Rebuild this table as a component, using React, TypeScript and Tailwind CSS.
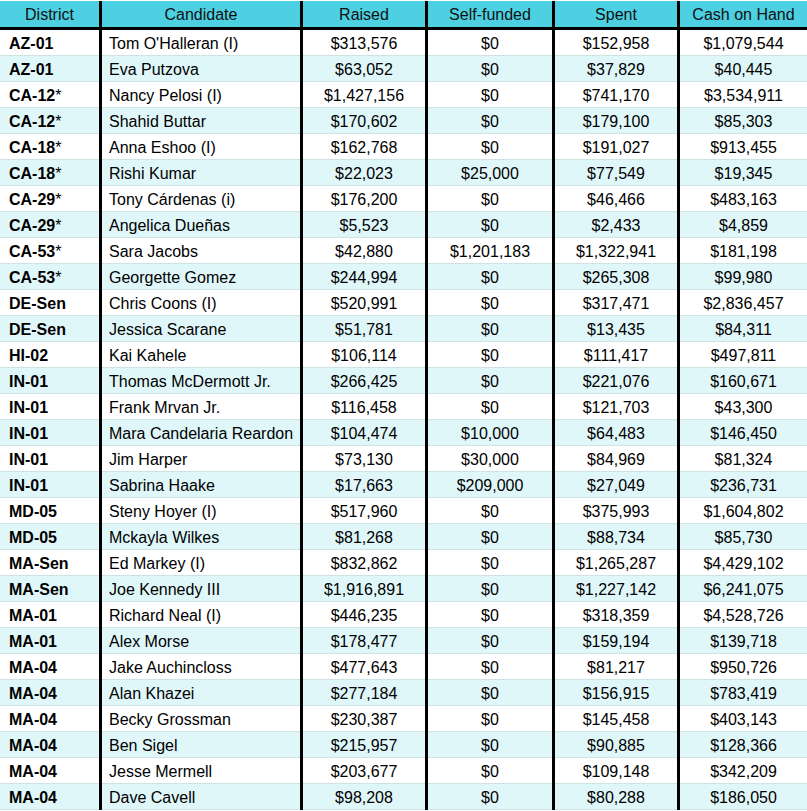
const rows: [string, string, string, string, string, string][] = [
  ['AZ-01', "Tom O'Halleran (I)", '$313,576', '$0', '$152,958', '$1,079,544'],
  ['AZ-01', 'Eva Putzova', '$63,052', '$0', '$37,829', '$40,445'],
  ['CA-12*', 'Nancy Pelosi (I)', '$1,427,156', '$0', '$741,170', '$3,534,911'],
  ['CA-12*', 'Shahid Buttar', '$170,602', '$0', '$179,100', '$85,303'],
  ['CA-18*', 'Anna Eshoo (I)', '$162,768', '$0', '$191,027', '$913,455'],
  ['CA-18*', 'Rishi Kumar', '$22,023', '$25,000', '$77,549', '$19,345'],
  ['CA-29*', 'Tony Cárdenas (i)', '$176,200', '$0', '$46,466', '$483,163'],
  ['CA-29*', 'Angelica Dueñas', '$5,523', '$0', '$2,433', '$4,859'],
  ['CA-53*', 'Sara Jacobs', '$42,880', '$1,201,183', '$1,322,941', '$181,198'],
  ['CA-53*', 'Georgette Gomez', '$244,994', '$0', '$265,308', '$99,980'],
  ['DE-Sen', 'Chris Coons (I)', '$520,991', '$0', '$317,471', '$2,836,457'],
  ['DE-Sen', 'Jessica Scarane', '$51,781', '$0', '$13,435', '$84,311'],
  ['HI-02', 'Kai Kahele', '$106,114', '$0', '$111,417', '$497,811'],
  ['IN-01', 'Thomas McDermott Jr.', '$266,425', '$0', '$221,076', '$160,671'],
  ['IN-01', 'Frank Mrvan Jr.', '$116,458', '$0', '$121,703', '$43,300'],
  ['IN-01', 'Mara Candelaria Reardon', '$104,474', '$10,000', '$64,483', '$146,450'],
  ['IN-01', 'Jim Harper', '$73,130', '$30,000', '$84,969', '$81,324'],
  ['IN-01', 'Sabrina Haake', '$17,663', '$209,000', '$27,049', '$236,731'],
  ['MD-05', 'Steny Hoyer (I)', '$517,960', '$0', '$375,993', '$1,604,802'],
  ['MD-05', 'Mckayla Wilkes', '$81,268', '$0', '$88,734', '$85,730'],
  ['MA-Sen', 'Ed Markey (I)', '$832,862', '$0', '$1,265,287', '$4,429,102'],
  ['MA-Sen', 'Joe Kennedy III', '$1,916,891', '$0', '$1,227,142', '$6,241,075'],
  ['MA-01', 'Richard Neal (I)', '$446,235', '$0', '$318,359', '$4,528,726'],
  ['MA-01', 'Alex Morse', '$178,477', '$0', '$159,194', '$139,718'],
  ['MA-04', 'Jake Auchincloss', '$477,643', '$0', '$81,217', '$950,726'],
  ['MA-04', 'Alan Khazei', '$277,184', '$0', '$156,915', '$783,419'],
  ['MA-04', 'Becky Grossman', '$230,387', '$0', '$145,458', '$403,143'],
  ['MA-04', 'Ben Sigel', '$215,957', '$0', '$90,885', '$128,366'],
  ['MA-04', 'Jesse Mermell', '$203,677', '$0', '$109,148', '$342,209'],
  ['MA-04', 'Dave Cavell', '$98,208', '$0', '$80,288', '$186,050'],
];

const headers = ['District', 'Candidate', 'Raised', 'Self-funded', 'Spent', 'Cash on Hand'];

function District({ value }: { value: string }) {
  const star = value.endsWith('*');
  const code = star ? value.slice(0, -1) : value;
  return (
    <span className="font-bold">
      {code}
      {star && <span className="font-normal">*</span>}
    </span>
  );
}

export default function App() {
  return (
    <div className="w-[807px] bg-white pt-px font-['Liberation_Sans',Arial,sans-serif] text-[16px] leading-none text-black">
      <div className="grid grid-cols-[99px_198px_122px_124px_122px_127px] gap-x-[3px] bg-black">
        {headers.map((h) => (
          <div
            key={h}
            className="flex h-[29px] items-center justify-center border-b-[3px] border-black bg-[#4dd0e1] pt-px text-[#111]"
          >
            {h}
          </div>
        ))}
        {rows.map((r, i) => {
          const bg = i % 2 === 0 ? 'bg-white' : 'bg-[#e0f7fa]';
          return r.map((cell, j) => (
            <div
              key={`${i}-${j}`}
              className={`flex h-[26px] items-center border-b border-[#cfe3e7] pt-[3px] ${bg} ${
                j === 0 ? 'pl-[9px]' : j === 1 ? 'pl-[7px]' : 'justify-center'
              }`}
            >
              {j === 0 ? <District value={cell} /> : cell}
            </div>
          ));
        })}
      </div>
    </div>
  );
}
